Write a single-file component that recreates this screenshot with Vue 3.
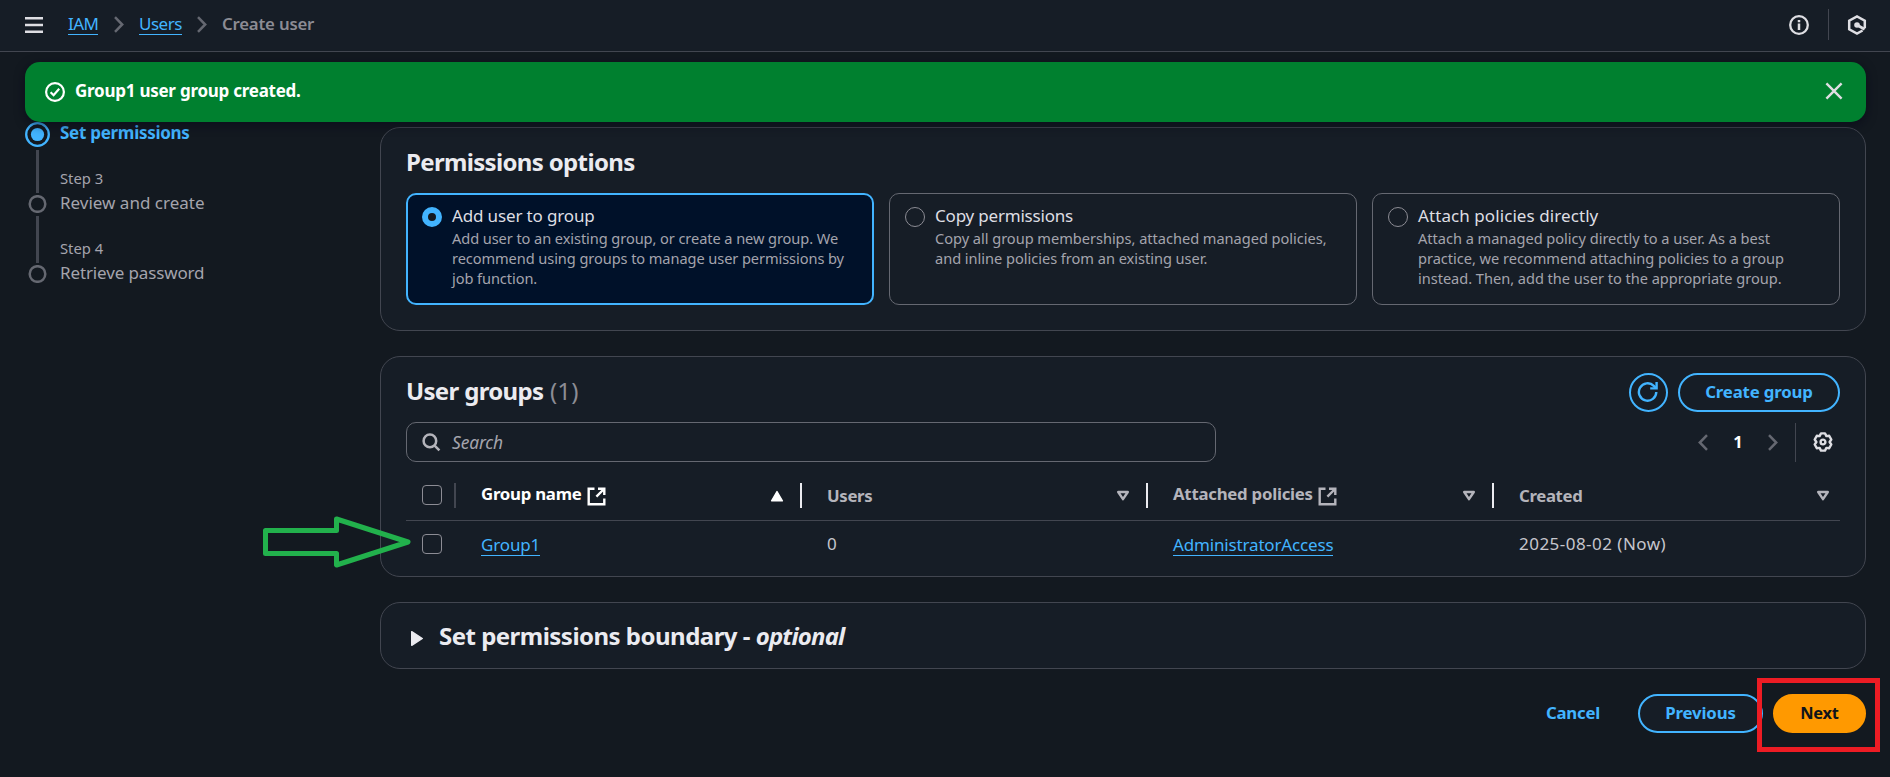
<script setup>
const options = [
  {
    key: 'group', title: 'Add user to group', selected: true,
    lines: ['Add user to an existing group, or create a new group. We', 'recommend using groups to manage user permissions by', 'job function.']
  },
  {
    key: 'copy', title: 'Copy permissions', selected: false,
    lines: ['Copy all group memberships, attached managed policies,', 'and inline policies from an existing user.']
  },
  {
    key: 'attach', title: 'Attach policies directly', selected: false,
    lines: ['Attach a managed policy directly to a user. As a best', 'practice, we recommend attaching policies to a group', 'instead. Then, add the user to the appropriate group.']
  }
]
const columns = [
  { key: 'name', label: 'Group name', external: true, sorted: true },
  { key: 'users', label: 'Users', external: false, sorted: false },
  { key: 'policies', label: 'Attached policies', external: true, sorted: false },
  { key: 'created', label: 'Created', external: false, sorted: false }
]
</script>

<template>
  <div class="page">
    <header class="topbar">
      <svg class="menu" width="18" height="16" viewBox="0 0 18 16"><path d="M0 1.25h18M0 8h18M0 14.75h18" stroke="#dedee3" stroke-width="2.5" /></svg>
      <nav class="crumbs">
        <a class="link crumb-iam">IAM</a>
        <svg class="chev" width="10" height="17" viewBox="0 0 10 17"><path d="M1 1.2l7.2 7.3L1 15.8" /></svg>
        <a class="link crumb-users">Users</a>
        <svg class="chev" width="10" height="17" viewBox="0 0 10 17"><path d="M1 1.2l7.2 7.3L1 15.8" /></svg>
        <span class="crumb-current">Create user</span>
      </nav>
      <div class="tools">
        <svg width="20" height="20" viewBox="0 0 20 20" fill="none" stroke="#dedee3">
          <circle cx="10" cy="10" r="8.8" stroke-width="2.3" />
          <path d="M10 8.4V15M10 5v2.2" stroke-width="2.5" />
        </svg>
        <i class="tools-sep"></i>
        <svg width="20" height="20" viewBox="0 0 20 20" fill="none" stroke="#dedee3" stroke-width="2.5">
          <path d="M17.8 13.2V5.7L10 1.5 2.2 5.7v8.6L10 18.5l5.6-3" />
          <path d="M10 10l7.6 4.2" stroke-width="2.8" />
          <circle cx="10" cy="10" r="2.8" fill="#dedee3" stroke="none" />
        </svg>
      </div>
    </header>

    <div class="flash">
      <svg width="20" height="20" viewBox="0 0 20 20" fill="none" stroke="#fff" stroke-width="2.2">
        <circle cx="10" cy="10" r="8.9" />
        <path d="M5.6 10.2l3 3 5.6-6.4" />
      </svg>
      <span class="flash-text">Group1 user group created.</span>
      <svg class="flash-close" width="18" height="18" viewBox="0 0 18 18"><path d="M1.4 1.4l15.2 15.2M16.6 1.4L1.4 16.6" stroke="#dedee3" stroke-width="2.4" /></svg>
    </div>

    <div class="body">
      <aside class="steps">
        <div class="rail">
          <svg width="25" height="25" viewBox="0 0 25 25">
            <circle cx="12.5" cy="12.5" r="11.3" fill="none" stroke="#42b4ff" stroke-width="2.3" />
            <circle cx="12.5" cy="12.5" r="6.6" fill="#42b4ff" />
          </svg>
          <i class="rail-line first"></i>
          <svg width="19" height="18" viewBox="0 0 19 18"><circle cx="9.5" cy="9" r="7.8" fill="none" stroke="#656871" stroke-width="2.5" /></svg>
          <i class="rail-line"></i>
          <svg width="19" height="18" viewBox="0 0 19 18"><circle cx="9.5" cy="9" r="7.8" fill="none" stroke="#656871" stroke-width="2.5" /></svg>
        </div>
        <div class="step-texts">
          <div class="step-title current">Set permissions</div>
          <div class="step-label">Step 3</div>
          <div class="step-title">Review and create</div>
          <div class="step-label">Step 4</div>
          <div class="step-title retrieve">Retrieve password</div>
        </div>
      </aside>

      <main class="content">
        <section class="card options-card">
          <h2 class="heading">Permissions options</h2>
          <div class="tiles">
            <div v-for="o in options" :key="o.key" class="tile" :class="{ selected: o.selected }">
              <i class="radio"></i>
              <div>
                <div class="tile-title" :class="o.key">{{ o.title }}</div>
                <div v-for="l in o.lines" :key="l" class="tile-line" :class="o.key">{{ l }}</div>
              </div>
            </div>
          </div>
        </section>

        <section class="card groups-card">
          <div class="groups-head">
            <h2 class="heading groups-title">User groups <span class="count">(1)</span></h2>
            <div class="actions">
              <button class="btn round">
                <svg width="22" height="22" viewBox="0 0 22 22" fill="none" stroke="#42b4ff" stroke-width="2.4">
                  <path d="M19.3 11a8.7 8.7 0 1 1-2.5-6.1L19 7.1" />
                  <path d="M19.6 1v6.4h-6.4" />
                </svg>
              </button>
              <button class="btn create">Create group</button>
            </div>
          </div>
          <div class="filter-row">
            <div class="search">
              <svg width="19" height="19" viewBox="0 0 19 19" fill="none" stroke="#b4b4bb" stroke-width="2.5">
                <circle cx="7.9" cy="7.9" r="6.3" />
                <path d="M12.4 12.4l5 5" />
              </svg>
              <span>Search</span>
            </div>
            <div class="pager">
              <svg class="chev" width="10" height="17" viewBox="0 0 10 17"><path d="M9 1.2L1.8 8.5 9 15.8" /></svg>
              <b>1</b>
              <svg class="chev" width="10" height="17" viewBox="0 0 10 17"><path d="M1 1.2l7.2 7.3L1 15.8" /></svg>
              <i class="pager-sep"></i>
              <svg width="20" height="20" viewBox="0 0 20 20" fill="none" stroke="#dedee3" stroke-width="2.4" stroke-linejoin="round">
                <path d="M8 1.4h4l1.4 2.7 2.8-.3 2.1 3.7-1.7 2.5 1.7 2.5-2.1 3.7-2.8-.3L12 18.6H8l-1.4-2.7-2.8.3-2.1-3.7L3.4 10 1.7 7.5l2.1-3.7 2.8.3z" />
                <circle cx="10" cy="10" r="2.4" />
              </svg>
            </div>
          </div>
          <div class="grid-row head">
            <div class="cell-check"><i class="checkbox"></i></div>
            <div v-for="c in columns" :key="c.key" class="th" :class="[c.key, { sorted: c.sorted, raised: c.external }]">
              <span class="th-label">{{ c.label }}</span>
              <svg v-if="c.external" class="ext" width="19" height="19" viewBox="0 0 19 19" fill="none" stroke="currentColor" stroke-width="2.4">
                <path d="M7.5 1.7H1.7v15.6h15.6V11.5" />
                <path d="M11 1.7h6.3V8M17 2l-7.6 7.6" />
              </svg>
              <svg v-if="c.sorted" class="sort" width="14" height="12" viewBox="0 0 14 12"><path d="M7 1.6L12.4 10.8H1.6z" fill="#fff" stroke="#fff" stroke-width="1.4" stroke-linejoin="round" /></svg>
              <svg v-else class="sort" width="14" height="12" viewBox="0 0 14 12"><path d="M2.2 2h9.6L7 9.2z" fill="none" stroke="#b4b4bb" stroke-width="2.4" stroke-linejoin="round" /></svg>
            </div>
          </div>
          <div class="grid-row data">
            <div class="cell-check"><i class="checkbox"></i></div>
            <div class="td"><a class="link group">Group1</a></div>
            <div class="td">0</div>
            <div class="td"><a class="link admin">AdministratorAccess</a></div>
            <div class="td date">2025-08-02 (Now)</div>
          </div>
        </section>

        <section class="card boundary">
          <svg width="14" height="17" viewBox="0 0 14 17"><path d="M1.7 1.7v13.6L12.3 8.5z" fill="#ebebf0" stroke="#ebebf0" stroke-width="1.4" stroke-linejoin="round" /></svg>
          <h2 class="heading boundary-title">Set permissions boundary - <em>optional</em></h2>
        </section>

        <div class="footer">
          <button class="btn plain">Cancel</button>
          <button class="btn previous">Previous</button>
          <button class="btn next">Next</button>
        </div>
      </main>
    </div>

    <svg class="arrow" width="160" height="60" viewBox="0 0 160 60">
      <path d="M5.5 16.5H76.5V5L148 28 76.5 51V39.5H5.5z" fill="none" stroke="#22b14c" stroke-width="5" stroke-linejoin="round" />
    </svg>
    <div class="marker"></div>
  </div>
</template>

<style>
html, body { margin: 0; background: #131920; overflow: hidden; }
</style>

<style scoped>
.page { position: relative; width: 1890px; height: 777px; overflow: hidden; background: #131920; color: #c6c6cd; font-family: "Noto Sans", "Open Sans", sans-serif; font-size: 17px; box-sizing: border-box; }
.page * { box-sizing: border-box; white-space: nowrap; }
svg { display: block; flex: none; }
i { display: block; flex: none; }
.link { display: inline-block; color: #42b4ff; line-height: 20px; border-bottom: 1px solid #42b4ff; }

.topbar { display: flex; align-items: center; height: 52px; padding: 0 23px 2px 25px; background: #161d26; border-bottom: 1px solid #424650; }
.crumbs { display: flex; align-items: center; margin-left: 25px; }
.chev path { fill: none; stroke: #656871; stroke-width: 2.5; }
.crumbs .chev { margin: 0 15px 0 16px; }
.crumbs .crumb-users + .chev { margin-left: 15px; margin-right: 16px; }
.crumb-iam { width: 30px; letter-spacing: -0.6px; }
.crumb-users { width: 43px; letter-spacing: -0.5px; }
.crumbs .chev + .crumb-current { margin-left: -1px; }
.crumb-current { color: #8c8c94; font-weight: 600; font-size: 16.8px; letter-spacing: -0.2px; line-height: 20px; margin-top: -2px; }
.crumbs .link { margin-top: -1px; }
.tools { display: flex; align-items: center; margin-left: auto; }
.tools-sep { width: 1px; height: 31px; margin: 0 18px 0 19px; background: #424650; }

.flash { position: absolute; z-index: 2; left: 25px; top: 62px; display: flex; align-items: center; width: 1841px; height: 60px; padding: 0 23px 0 20px; border-radius: 15px; background: #00802f; box-shadow: 0 3px 10px 1px rgba(8, 10, 24, 0.55); }
.flash-text { margin: -3px 0 0 10px; color: #fff; font-weight: 700; letter-spacing: -0.25px; }
.flash-close { margin-top: -2px; margin-left: auto; }

.body { display: flex; padding: 68px 24px 0 25px; }
.steps { display: flex; width: 355px; gap: 10px; }
.rail { display: flex; flex-direction: column; align-items: center; width: 25px; padding-top: 2px; }
.rail-line { width: 3px; height: 47px; margin: 3px 0 2px; background: #424650; }
.rail-line.first { height: 43px; }
.step-title { height: 25px; line-height: 25px; color: #a4a4ad; }
.step-title.current { color: #42b4ff; font-weight: 700; letter-spacing: -0.28px; margin-bottom: 24px; }
.step-title.retrieve { letter-spacing: -0.13px; }
.step-label { height: 21px; line-height: 19px; font-size: 14.8px; color: #a4a4ad; }
.step-title + .step-label:not(:nth-child(2)) { margin-top: 24px; }

.content { width: 1486px; padding-top: 7px; }
.card { background: #161d26; border: 1px solid #424650; border-radius: 20px; padding: 0 25px; }
.heading { margin: 0; color: #ebebf0; font-size: 24px; line-height: 30px; font-weight: 700; letter-spacing: -0.66px; }
.options-card { height: 204px; padding-top: 19px; }
.tiles { display: grid; grid-template-columns: repeat(3, 1fr); gap: 15px; margin-top: 16px; }
.tile { display: flex; gap: 10px; height: 112px; padding: 9px 15px; border: 1px solid #656871; border-radius: 10px; }
.tile.selected { border: 2px solid #42b4ff; background: #001129; padding: 8px 14px; }
.radio { width: 20px; height: 20px; margin-top: 4px; border: 1px solid #8c8c94; border-radius: 50%; }
.selected .radio { border: 6px solid #42b4ff; background: #131920; }
.tile-title { color: #dedee3; line-height: 25px; letter-spacing: -0.13px; }
.tile-title.copy { letter-spacing: -0.2px; }
.tile-title.attach { letter-spacing: 0.08px; }
.tile-line { font-size: 14.6px; line-height: 20px; color: #a4a4ad; letter-spacing: -0.03px; }
.tile-line.group { letter-spacing: -0.08px; }

.groups-card { height: 221px; margin-top: 25px; padding-top: 16px; }
.groups-head { display: flex; justify-content: space-between; height: 39px; }
.groups-title { margin-top: 3px; }
.count { margin-left: 1px; color: #8c8c94; font-weight: 400; letter-spacing: 0.1px; }
.actions { display: flex; gap: 10px; }
.btn { height: 39px; padding: 0 0 3px; border: 2px solid #42b4ff; border-radius: 20px; background: #161d26; color: #42b4ff; font-family: inherit; font-size: 16.8px; font-weight: 700; letter-spacing: -0.15px; text-align: center; }
.btn.round { display: flex; align-items: center; justify-content: center; width: 39px; padding: 0 1px 1px 0; }
.btn.create { width: 162px; }
.filter-row { display: flex; justify-content: space-between; align-items: center; height: 40px; margin-top: 10px; }
.search { display: flex; align-items: center; width: 810px; height: 40px; padding-left: 15px; border: 1px solid #656871; border-radius: 10px; }
.search span { margin: -1px 0 0 11px; font-style: italic; font-size: 17.4px; color: #a4a4ad; letter-spacing: -0.15px; }
.pager { display: flex; align-items: center; padding-right: 7px; }
.pager b { width: 10px; margin: -1px 25px 0; color: #fff; font-size: 16.5px; text-align: center; }
.pager-sep { width: 1px; height: 39px; margin: 0 17px; background: #424650; }

.grid-row { display: grid; grid-template-columns: 50px repeat(4, 346px); align-items: center; }
.grid-row.head { height: 59px; border-bottom: 1px solid #424650; padding-top: 9px; }
.grid-row.data { height: 46px; }
.cell-check { display: flex; align-items: center; height: 25px; padding-left: 16px; }
.head .cell-check { border-right: 2px solid #424650; }
.head .checkbox { margin-top: -1px; }
.checkbox { width: 20px; height: 20px; border: 1.4px solid #8c8c94; border-radius: 4px; }
.th { display: flex; align-items: center; height: 25px; padding: 0 16px 0 25px; border-right: 2px solid #ebebf0; color: #b4b4bb; font-weight: 700; font-size: 16.8px; letter-spacing: -0.25px; }
.th.created { border-right: none; padding-right: 10px; }
.th.name { color: #fff; }
.th.created, .th.users { letter-spacing: -0.35px; }
.th-label { line-height: 24px; }
.raised .th-label { margin-top: -4px; }
.ext { margin: 1px 0 0 5px; }
.sort { margin-left: auto; }
.td { padding-left: 25px; line-height: 24px; }
.td .link { line-height: 21px; margin-top: 2px; }
.group { letter-spacing: -0.15px; }
.admin { letter-spacing: -0.16px; }
.date { letter-spacing: 0.47px; }

.boundary { display: flex; align-items: center; height: 67px; margin-top: 25px; padding-left: 29px; }
.boundary svg { margin-top: 5px; }
.boundary-title { margin: 1px 0 0 15px; letter-spacing: -0.52px; }
.boundary-title em { letter-spacing: -0.8px; }

.footer { display: flex; justify-content: flex-end; margin-top: 25px; }
.btn.plain { border-color: transparent; background: none; width: 58px; margin-right: 36px; letter-spacing: -0.25px; }
.btn.previous { width: 125px; margin-right: 10px; }
.btn.next { width: 93px; border-color: #ff9900; background: #ff9900; color: #0f141a; font-size: 16.4px; letter-spacing: -0.2px; }

.arrow { position: absolute; left: 260px; top: 514px; z-index: 3; }
.marker { position: absolute; z-index: 3; left: 1757px; top: 678px; width: 123px; height: 74px; border: 5px solid #ed1c24; }
</style>
